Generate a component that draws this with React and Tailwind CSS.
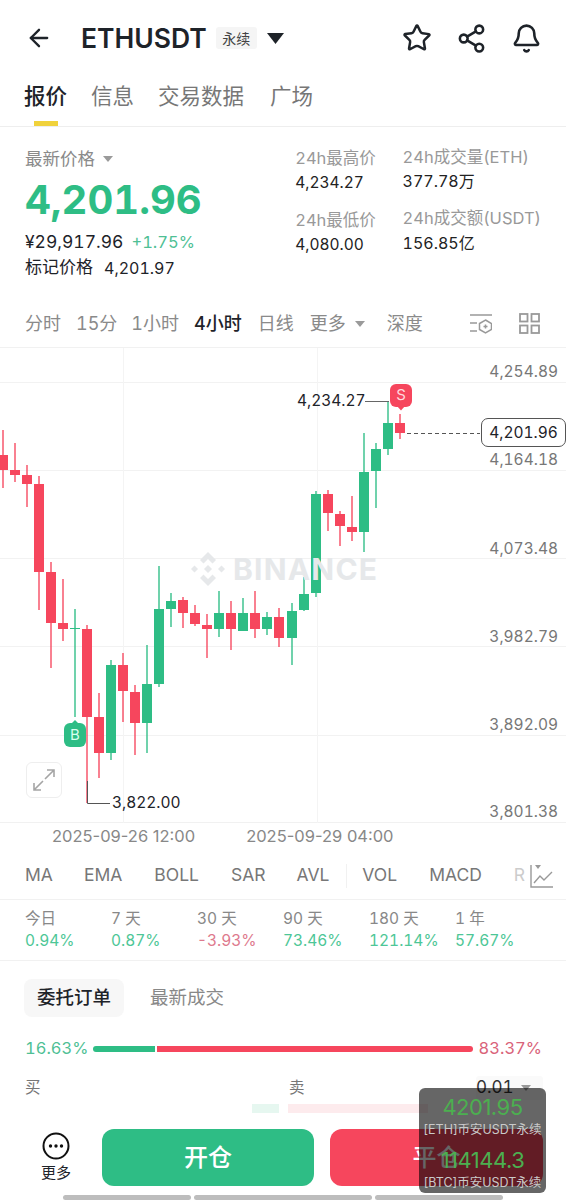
import React from "react";
import { ArrowLeft, Star, Share2, Bell } from "lucide-react";

const G = "#2EBD85";
const R = "#F6465D";
// [center x, body half width, bodyTop, bodyBottom, wickTop, wickBottom, colour]
const candles = [
  [3, 5, 454, 469, 429, 487, R], [15, 5, 469, 474, 442, 481, R], [27, 5, 474, 483, 464, 506, R],
  [39, 5, 483, 571, 475, 609, R], [51, 5, 571, 622, 561, 667, R], [63, 5, 622, 628, 578, 640, R],
  [75, 5, 627, 628, 608, 716, G], [87, 5, 628, 716, 624, 802, R], [99, 5, 716, 752, 692, 777, R],
  [111, 5, 664, 752, 659, 759, G], [123, 5, 664, 690, 652, 721, R], [135, 5, 691, 722, 684, 754, R],
  [147, 5, 683, 722, 644, 752, G], [159, 5, 608, 683, 565, 686, G], [171, 5, 600, 608, 592, 626, G],
  [183, 5, 599, 612, 596, 627, R], [195, 5, 612, 623, 604, 625, R], [207, 5, 624, 628, 613, 657, R],
  [219, 5, 612, 628, 590, 636, G], [231, 5, 612, 628, 600, 649, R], [243, 5, 612, 630, 597, 630, G],
  [255, 5, 612, 628, 590, 637, R], [267, 5, 616, 628, 611, 634, G], [279, 5, 616, 637, 607, 646, R],
  [292, 5, 610, 637, 602, 664, G], [304, 5, 593, 609, 576, 610, G], [316, 5, 493, 592, 490, 596, G],
  [328, 5, 493, 512, 489, 530, R], [340, 5, 513, 525, 510, 545, R], [352, 5, 526, 531, 495, 540, R],
  [364, 5, 471, 531, 432, 551, G], [376, 5, 448, 470, 442, 507, G], [388, 5, 422, 448, 400, 454, G],
  [400, 5, 422, 432, 413, 438, R],
];

const axis = [
  ["4,254.89", 359], ["4,164.18", 447], ["4,073.48", 536],
  ["3,982.79", 624], ["3,892.09", 712], ["3,801.38", 799],
];

function Caret({ w = 10, h = 6, color = "#9a9a9a" }) {
  return (
    <svg width={w} height={h} viewBox="0 0 10 6" preserveAspectRatio="none">
      <path d="M0 0h10L5 6z" fill={color} />
    </svg>
  );
}

function Diamond() {
  return (
    <svg width="36" height="36" viewBox="0 0 36 36" fill="#e6e8ea">
      <path d="M18 1l8 8-3.5 3.5L18 8l-4.5 4.5L10 9z" />
      <path d="M18 35l-8-8 3.5-3.5L18 28l4.500-4.500L26 27z" />
      <path d="M1 18l3.500-3.500L8 18l-3.500 3.500z" />
      <path d="M35 18l-3.500 3.500L28 18l3.500-3.500z" />
      <path d="M18 14l4 4-4 4-4-4z" />
    </svg>
  );
}

function Chart() {
  return (
    <div className="relative h-[475px] border-t border-[#f1f1f1]">
      <svg className="absolute inset-0" width="566" height="475" viewBox="0 347 566 475">
        {[381, 469, 557, 645, 734].map((y) => (
          <line key={y} x1="0" x2="566" y1={y + 0.5} y2={y + 0.5} stroke="#f2f2f2" />
        ))}
        {[123, 317].map((x) => (
          <line key={x} x1={x + 0.5} x2={x + 0.5} y1="347" y2="822" stroke="#f4f4f4" />
        ))}
        {candles.map(([x, hw, t, b, wt, wb, c], i) => (
          <g key={i}>
            <rect x={x - 0.75} y={wt} width="1.5" height={wb - wt} fill={c} opacity="0.9" />
            <rect x={x - hw} y={t} width={hw * 2} height={Math.max(b - t, 1)} fill={c} />
          </g>
        ))}
        <line x1="407" x2="480" y1="432.500" y2="432.500" stroke="#555" strokeDasharray="4 3" />
        <path d="M365 400.500H389" stroke="#666" fill="none" />
        <path d="M87.500 780V802.500H110" stroke="#555" fill="none" />
        <path d="M397 405h8l-4 4.500z" fill={R} />
        <path d="M71 723h8l-4-4z" fill={G} />
      </svg>

      <div className="absolute left-[190px] top-[203px] flex items-center gap-[7px]">
        <Diamond />
        <span className="text-[30px] leading-[36px] font-bold tracking-[1.2px] text-[#e6e8ea]">BINANCE</span>
      </div>

      {axis.map(([t, top]) => (
        <div key={t} className="absolute right-[8px] text-[15.500px] leading-[24px] text-[#777]" style={{ top: top - 347 }}>{t}</div>
      ))}

      <div className="absolute left-[297px] top-[41px] text-[15.500px] leading-[24px] text-[#1e2329]">4,234.27</div>
      <div className="absolute left-[112px] top-[443px] text-[15.500px] leading-[24px] text-[#1e2329]">3,822.00</div>

      <div className="absolute left-[481px] top-[70px] flex h-[29px] w-[85px] items-center justify-center rounded-[7px] border border-[#555] bg-white text-[15.500px] text-[#1e2329]">4,201.96</div>

      <div className="absolute left-[390px] top-[36px] flex h-[23px] w-[22px] items-center justify-center rounded-[6px] bg-[#F6465D] text-[15px] text-[#ffd9de]">S</div>
      <div className="absolute left-[64px] top-[375px] flex h-[24px] w-[22px] items-center justify-center rounded-[6px] bg-[#2EBD85] text-[15px] text-[#d9fff0]">B</div>

      <div className="absolute left-[26px] top-[414px] flex h-[36px] w-[36px] items-center justify-center rounded-[6px] border border-[#eeeeee] bg-white">
        <svg width="24" height="24" viewBox="0 0 24 24" fill="none" stroke="#a5a5a5" strokeWidth="1.600">
          <path d="M13 11L22 2M15 2h7v7M11 13l-9 9M2 15v7h7" />
        </svg>
      </div>
    </div>
  );
}

const periods = [
  ["今日", "0.94%", G], ["7 天", "0.87%", G], ["30 天", "-3.93%", "#d9637a"],
  ["90 天", "73.46%", G], ["180 天", "121.14%", G], ["1 年", "57.67%", G],
];

export default function App() {
  return (
    <div className="relative h-[1200px] w-[566px] overflow-hidden bg-white font-['Inter','Noto_Sans_CJK_SC',sans-serif] tabular-nums text-[#1e2329]">
      {/* header */}
      <div className="flex h-[76px] items-center pl-[25px] pr-[24px]">
        <ArrowLeft size={28} strokeWidth={2} className="text-[#1e2329]" />
        <span className="ml-[28px] text-[26.500px] font-semibold leading-none">ETHUSDT</span>
        <span className="ml-[9px] flex h-[22px] w-[41px] items-center justify-center rounded-[3px] bg-[#f5f5f5] text-[14px] text-[#444]">永续</span>
        <span className="ml-[10px]"><Caret w={17} h={11} color="#1e2329" /></span>
        <div className="ml-auto flex items-center gap-[24px]">
          <Star size={30} strokeWidth={2} />
          <Share2 size={31} strokeWidth={2} />
          <Bell size={31} strokeWidth={2} />
        </div>
      </div>

      {/* tabs */}
      <div className="flex h-[51px] gap-[24px] border-b border-[#eeeeee] pl-[24px] text-[21.500px] leading-[40px] text-[#777]">
        <div className="flex h-[50px] flex-col items-center justify-between">
          <span className="font-medium text-[#1e2329]">报价</span>
          <span className="h-[5px] w-[24px] bg-[#F0D23C]" />
        </div>
        <span>信息</span>
        <span>交易数据</span>
        <span className="ml-[2px]">广场</span>
      </div>

      {/* stats */}
      <div className="flex h-[173px] px-[25px]">
        <div className="w-[272px] pt-[20px]">
          <div className="flex h-[24px] items-center gap-[8px] text-[17.500px] text-[#8a8a8a]">最新价格<Caret /></div>
          <div className="mt-[3px] text-[40px] font-bold leading-[52px] text-[#2EBD85]">4,201.96</div>
          <div className="mt-[4px] flex h-[24px] items-center gap-[8px] text-[17.500px]">
            <span>¥29,917.96</span><span className="text-[16.500px] text-[#4fbf95]">+1.75%</span>
          </div>
          <div className="mt-[2px] flex h-[24px] items-center gap-[11px] text-[17px]">
            <span>标记价格</span><span className="text-[16px]">4,201.97</span>
          </div>
        </div>
        <div className="w-[108px] pt-[19px] text-[15.500px] leading-[24px] text-[#222]">
          <div className="whitespace-nowrap text-[16.500px] text-[#999]">24h最高价</div>
          <div className="mt-[1px]">4,234.27</div>
          <div className="mt-[13px] whitespace-nowrap text-[16.500px] text-[#999]">24h最低价</div>
          <div className="mt-[1px]">4,080.00</div>
        </div>
        <div className="pt-[18px] text-[16px] leading-[24px] text-[#222]">
          <div className="whitespace-nowrap text-[16.500px] text-[#999]">24h成交量(ETH)</div>
          <div>377.78万</div>
          <div className="mt-[13px] whitespace-nowrap text-[16.500px] text-[#999]">24h成交额(USDT)</div>
          <div className="mt-[1px]">156.85亿</div>
        </div>
      </div>

      {/* timeframes */}
      <div className="flex h-[47px] items-center pl-[25px] pr-[26px] text-[18px] text-[#8a8a8a]">
        <span>分时</span><span className="ml-[15px]">15分</span><span className="ml-[14px]">1小时</span>
        <span className="ml-[15px] font-medium text-[#1e2329]">4小时</span>
        <span className="ml-[16px]">日线</span>
        <span className="ml-[16px] flex items-center gap-[9px]">更多<Caret /></span>
        <span className="ml-[22px]">深度</span>
        <div className="ml-auto flex items-center gap-[27px]">
          <svg width="22" height="22" viewBox="0 0 22 22" fill="none" stroke="#999" strokeWidth="1.500">
            <path d="M0 2h22M0 10h7M0 18h7" />
            <path d="M15.500 7l6 3.500v6l-6 3.500-6-3.500v-6z" />
            <path d="M13.500 13.500h4M15.500 11.500v4" />
          </svg>
          <svg width="21" height="21" viewBox="0 0 21 21" fill="none" stroke="#999" strokeWidth="1.800">
            <rect x="1" y="1" width="7.500" height="7.500" /><rect x="12.500" y="1" width="7.500" height="7.500" />
            <rect x="1" y="12.500" width="7.500" height="7.500" /><rect x="12.500" y="12.500" width="7.500" height="7.500" />
          </svg>
        </div>
      </div>

      <Chart />

      {/* date axis */}
      <div className="flex h-[28px] items-center gap-[51px] border-t border-[#f1f1f1] pl-[52px] text-[16.500px] proportional-nums text-[#888]">
        <span>2025-09-26 12:00</span><span>2025-09-29 04:00</span>
      </div>

      {/* indicators */}
      <div className="flex h-[50px] items-center border-b border-[#f1f1f1] pl-[25px] pt-[2px] text-[17.500px] text-[#777]">
        <span>MA</span><span className="ml-[31px]">EMA</span><span className="ml-[32px]">BOLL</span>
        <span className="ml-[32px]">SAR</span><span className="ml-[31px]">AVL</span>
        <span className="ml-[17px] h-[24px] w-px bg-[#f1f1f1]" />
        <span className="ml-[15px]">VOL</span><span className="ml-[32px]">MACD</span>
        <span className="ml-[32px] text-[#ccc]">R</span>
        <svg className="ml-[5px]" width="23" height="24" viewBox="0 0 23 24" fill="none" stroke="#999" strokeWidth="1.400">
          <path d="M1 1v22h22" /><path d="M4 19l6-7 4 4 8-8" /><path d="M5 1h6L8 5z" fill="#999" stroke="none" />
        </svg>
      </div>

      {/* periods */}
      <div className="grid h-[61px] grid-cols-[86px_86px_86px_86px_86px_86px] content-center border-b border-[#f1f1f1] pl-[25px] text-[15.500px] leading-[22px]">
        {periods.map(([l, v, c]) => (
          <div key={l}>
            <div className="text-[#888]">{l}</div>
            <div style={{ color: c }} className="opacity-85">{v}</div>
          </div>
        ))}
      </div>

      {/* order tabs */}
      <div className="flex h-[69px] items-start pl-[24px] pt-[18px] text-[18.500px]">
        <span className="flex h-[38px] w-[100px] items-center justify-center rounded-[8px] bg-[#f7f7f7] font-medium">委托订单</span>
        <span className="ml-[26px] flex h-[38px] items-center text-[#888]">最新成交</span>
      </div>

      {/* ratio */}
      <div className="flex h-[37px] items-center pl-[25px] pr-[24px] text-[16.500px]">
        <span className="w-[68px] text-[#4fbf95]">16.63%</span>
        <span className="h-[6px] w-[62px] rounded-l-full bg-[#2EBD85]" />
        <span className="ml-[2px] h-[6px] w-[316px] rounded-r-full bg-[#F6465D]" />
        <span className="ml-auto text-[#d9637a]">83.37%</span>
      </div>

      {/* book header */}
      <div className="mt-[6px] flex h-[30px] items-center pl-[25px] pr-[23px] text-[15.500px] text-[#777]">
        <span className="w-[264px]">买</span>
        <span>卖</span>
        <span className="ml-auto flex h-[24px] w-[67px] items-center gap-[7px] rounded-[3px] bg-[#fafafa] text-[17px] text-[#333]">0.01<Caret /></span>
      </div>
      <div className="mt-[1px] flex h-[9px] items-center pl-[252px]">
        <span className="h-[9px] w-[27px] bg-[#e6f7f0]" />
        <span className="ml-[9px] h-[9px] w-[140px] bg-[#fdebed]" />
      </div>

      {/* bottom bar */}
      <div className="mt-[16px] flex h-[57px] items-stretch pr-[23px]">
        <div className="flex w-[102px] flex-col items-center gap-[3px] pl-[10px] pt-[3px]">
          <svg width="28" height="28" viewBox="0 0 28 28" fill="none">
            <circle cx="14" cy="14" r="12.500" stroke="#111" strokeWidth="2" />
            <circle cx="8.500" cy="14" r="1.700" fill="#111" /><circle cx="14" cy="14" r="1.700" fill="#111" /><circle cx="19.500" cy="14" r="1.700" fill="#111" />
          </svg>
          <span className="text-[15px] leading-[20px]">更多</span>
        </div>
        <button className="w-[212px] rounded-[12px] bg-[#2EBD85] text-[24px] font-medium text-white">开仓</button>
        <button className="ml-[16px] flex-1 rounded-[12px] bg-[#F6465D] text-[24px] font-medium text-white">平仓</button>
      </div>

      {/* home indicator */}
      <div className="mt-[9px] flex h-[5px] gap-[3px] pl-[63px]">
        <span className="w-[128px] rounded-full bg-[#bdbdbd]" />
        <span className="w-[178px] rounded-full bg-[#bdbdbd]" />
        <span className="w-[128px] rounded-full bg-[#bdbdbd]" />
      </div>

      {/* floating ticker widget */}
      <div className="absolute left-[419px] top-[1088px] flex h-[105px] w-[127px] flex-col items-center rounded-[6px] bg-black/60 pt-[3px] whitespace-nowrap proportional-nums">
        <span className="text-[22px] leading-[32px] tracking-[-0.5px] text-[#4CAF50]">4201.95</span>
        <span className="mt-[-3px] text-[12.500px] leading-[20px] text-[#c9c9c9]">[ETH]币安USDT永续</span>
        <span className="mt-[4px] text-[22px] leading-[32px] tracking-[-0.5px] text-[#4CAF50]">114144.3</span>
        <span className="mt-[-3px] text-[12.500px] leading-[20px] text-[#c9c9c9]">[BTC]币安USDT永续</span>
      </div>
    </div>
  );
}
